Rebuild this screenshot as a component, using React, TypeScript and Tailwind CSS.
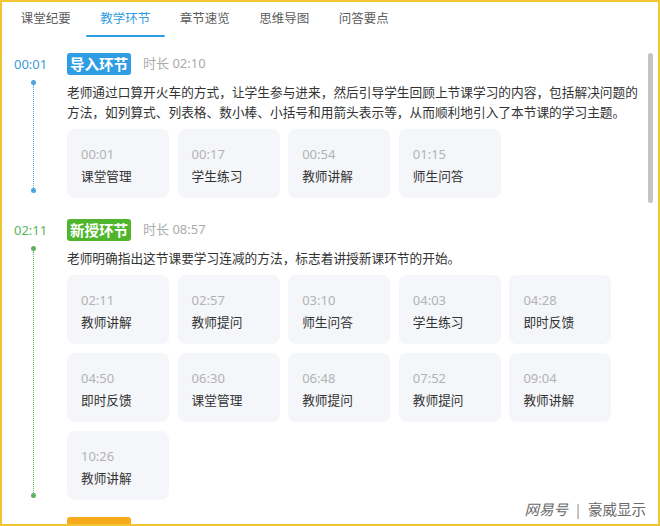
type Item = { t: string; label: string }

interface Section {
  time: string
  title: string
  duration: string
  desc: string
  items: Item[]
  timeColor: string
  badgeColor: string
  lineColor: string
  dotColor: string
  spacing: string
  lineEnd: string
}

const tabs = ['课堂纪要', '教学环节', '章节速览', '思维导图', '问答要点']

const sections: Section[] = [
  {
    time: '00:01',
    title: '导入环节',
    duration: '02:10',
    desc: '老师通过口算开火车的方式，让学生参与进来，然后引导学生回顾上节课学习的内容，包括解决问题的方法，如列算式、列表格、数小棒、小括号和用箭头表示等，从而顺利地引入了本节课的学习主题。',
    items: [
      { t: '00:01', label: '课堂管理' },
      { t: '00:17', label: '学生练习' },
      { t: '00:54', label: '教师讲解' },
      { t: '01:15', label: '师生问答' },
    ],
    timeColor: 'text-[#3d9bd6]',
    badgeColor: 'bg-[#2f9de4]',
    lineColor: 'border-[#4ea3dc]',
    dotColor: 'bg-[#4ea3dc]',
    spacing: 'pb-[21px]',
    lineEnd: 'mb-[5px]',
  },
  {
    time: '02:11',
    title: '新授环节',
    duration: '08:57',
    desc: '老师明确指出这节课要学习连减的方法，标志着讲授新课环节的开始。',
    items: [
      { t: '02:11', label: '教师讲解' },
      { t: '02:57', label: '教师提问' },
      { t: '03:10', label: '师生问答' },
      { t: '04:03', label: '学生练习' },
      { t: '04:28', label: '即时反馈' },
      { t: '04:50', label: '即时反馈' },
      { t: '06:30', label: '课堂管理' },
      { t: '06:48', label: '教师提问' },
      { t: '07:52', label: '教师提问' },
      { t: '09:04', label: '教师讲解' },
      { t: '10:26', label: '教师讲解' },
    ],
    timeColor: 'text-[#5cb55c]',
    badgeColor: 'bg-[#4fb52c]',
    lineColor: 'border-[#5fb35f]',
    dotColor: 'bg-[#5fb35f]',
    spacing: 'pb-[17px]',
    lineEnd: 'mb-[2px]',
  },
]

function TimelineSection({ s }: { s: Section }) {
  return (
    <div className={`flex ${s.spacing}`}>
      <div className="w-[65px] shrink-0 flex flex-col pl-[12px]">
        <div className={`h-[22px] leading-[22px] text-[13px] ${s.timeColor}`}>{s.time}</div>
        <div className={`flex-1 flex flex-col items-center w-[5px] ml-[17px] mt-[5px] ${s.lineEnd}`}>
          <div className={`w-[5px] h-[5px] rounded-full ${s.dotColor}`} />
          <div className={`flex-1 border-l border-dotted ${s.lineColor}`} />
          <div className={`w-[5px] h-[5px] rounded-full ${s.dotColor}`} />
        </div>
      </div>
      <div className="w-[576px]">
        <div className="flex items-center h-[22px]">
          <span
            className={`h-[22px] px-[3px] rounded-[3px] text-white font-bold text-[14.5px] leading-[22px] ${s.badgeColor}`}
          >
            {s.title}
          </span>
          <span className="ml-[12px] text-[13px] text-[#ababab]">时长 {s.duration}</span>
        </div>
        <p className="mt-[7px] text-[12.7px] leading-[20px] text-[#333]">{s.desc}</p>
        <div className="mt-[7px] grid grid-cols-[repeat(5,102px)] gap-x-[8.6px] gap-y-[9px]">
          {s.items.map((it, i) => (
            <div key={i} className="h-[69px] rounded-[8px] bg-[#f4f6f9] pl-[14px] pt-[15px]">
              <div className="text-[13px] leading-[20px] text-[#b3b3b3]">{it.t}</div>
              <div className="mt-[2px] text-[12.7px] leading-[20px] text-[#333]">{it.label}</div>
            </div>
          ))}
        </div>
      </div>
    </div>
  )
}

export default function App() {
  return (
    <div
      className="relative w-[660px] h-[526px] border-2 border-[#f3c530] bg-white overflow-hidden flex flex-col"
      style={{ fontFamily: '"Noto Sans", "Noto Sans CJK SC", sans-serif' }}
    >
      <div className="flex pl-[4px] h-[36px] shrink-0">
        {tabs.map((t, i) => (
          <div key={t} className="relative w-[79.5px] text-center pt-[3px]">
            <span
              className={`text-[12.5px] leading-[20px] ${i === 1 ? 'text-[#2f9be0]' : 'text-[#5c5c5c]'}`}
            >
              {t}
            </span>
            {i === 1 && (
              <div className="absolute left-0 right-0 bottom-[1px] h-[2.5px] bg-[#2f9be0] rounded-full" />
            )}
          </div>
        ))}
      </div>
      <div className="flex-1 overflow-hidden pt-[15px]">
        {sections.map((s) => (
          <TimelineSection key={s.time} s={s} />
        ))}
        <div className="flex">
          <div className="w-[65px] shrink-0" />
          <div className="w-[64px] h-[22px] rounded-[3px] bg-[#f7ab1b]" />
        </div>
      </div>
      <div className="absolute left-[646px] top-[51px] w-[5px] h-[150px] rounded-full bg-[#c4c4c4]" />
      <div className="absolute right-[12px] bottom-[5px] flex items-center text-[14.5px] leading-[20px] text-[#6a6a6a]">
        <span className="italic">网易号</span>
        <span className="mx-[6px] text-[#999]">|</span>
        <span>豪威显示</span>
      </div>
    </div>
  )
}
